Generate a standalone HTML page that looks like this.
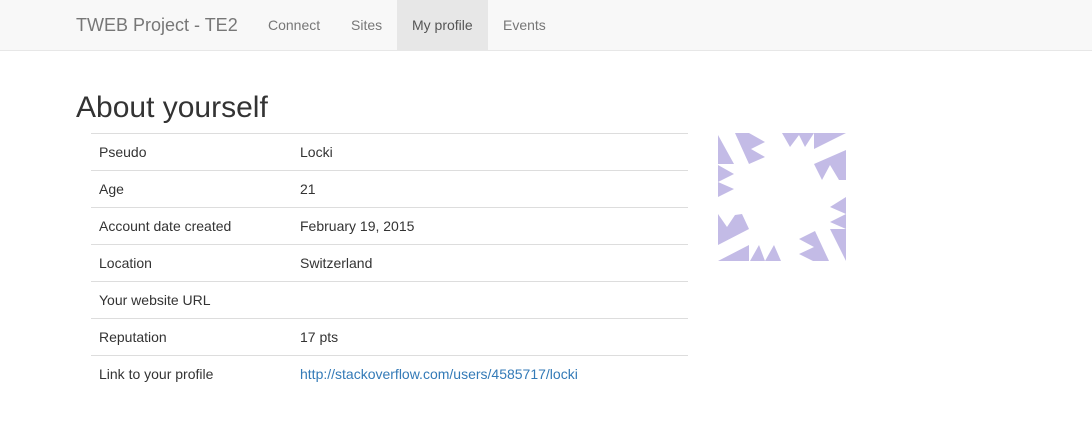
<!DOCTYPE html>
<html><head><style>
body{margin:0;font-family:"Liberation Sans",sans-serif;font-size:14px;color:#333;background:#fff;width:1092px;height:425px;overflow:hidden}
.nav{height:50px;background:#f8f8f8;border-bottom:1px solid #e7e7e7;position:relative}
.nav span{position:absolute;top:0;line-height:50px;color:#777}
.brand{left:76px;font-size:18px}
.act{background:#e7e7e7;color:#555!important;padding:0 15px}
h1{position:absolute;left:76px;top:90px;margin:0;font-size:30px;font-weight:500;line-height:36px}
table{position:absolute;left:91px;top:133px;width:597px;border-collapse:collapse}
td{border-top:1px solid #ddd;height:36px;padding:0 8px;vertical-align:middle}
td:first-child{width:185px}
a{color:#337ab7;text-decoration:none}
svg{position:absolute;left:718px;top:133px}
</style></head><body>
<div class="nav">
<span class="brand">TWEB Project - TE2</span>
<span style="left:268px">Connect</span>
<span style="left:351px">Sites</span>
<span class="act" style="left:397px">My profile</span>
<span style="left:503px">Events</span>
</div>
<h1>About yourself</h1>
<table>
<tr><td>Pseudo</td><td>Locki</td></tr>
<tr><td>Age</td><td>21</td></tr>
<tr><td>Account date created</td><td>February 19, 2015</td></tr>
<tr><td>Location</td><td>Switzerland</td></tr>
<tr><td>Your website URL</td><td></td></tr>
<tr><td>Reputation</td><td>17 pts</td></tr>
<tr><td>Link to your profile</td><td><a>http://stackoverflow.com/users/4585717/locki</a></td></tr>
</table>
<svg width="128" height="128" viewBox="0 0 128 128" fill="#c3bbe6">
<polygon points="0,2 0,31 16,31"/>
<polygon points="17,0 31,0 47,9 33,16 47,24 31,31"/>
<polygon points="64,0 72,14 81,2 87,14 96,0"/>
<polygon points="96,0 96,16 128,0"/>
<polygon points="96,31 128,17 128,47 121,47 112,32 104,47"/>
<polygon points="0,32 16,41 0,49 16,56 0,64"/>
<polygon points="128,64 112,74 128,81 112,89 128,96"/>
<polygon points="0,81 9,94 17,82 24,81 31,96 0,112"/>
<polygon points="0,128 31,112 31,128"/>
<polygon points="32,128 41,112 47,128 56,112 63,128"/>
<polygon points="81,106 97,98 111,128 95,128 81,121 96,114 81,106"/>
<polygon points="112,96 128,96 128,128"/>
</svg>
</body></html>
